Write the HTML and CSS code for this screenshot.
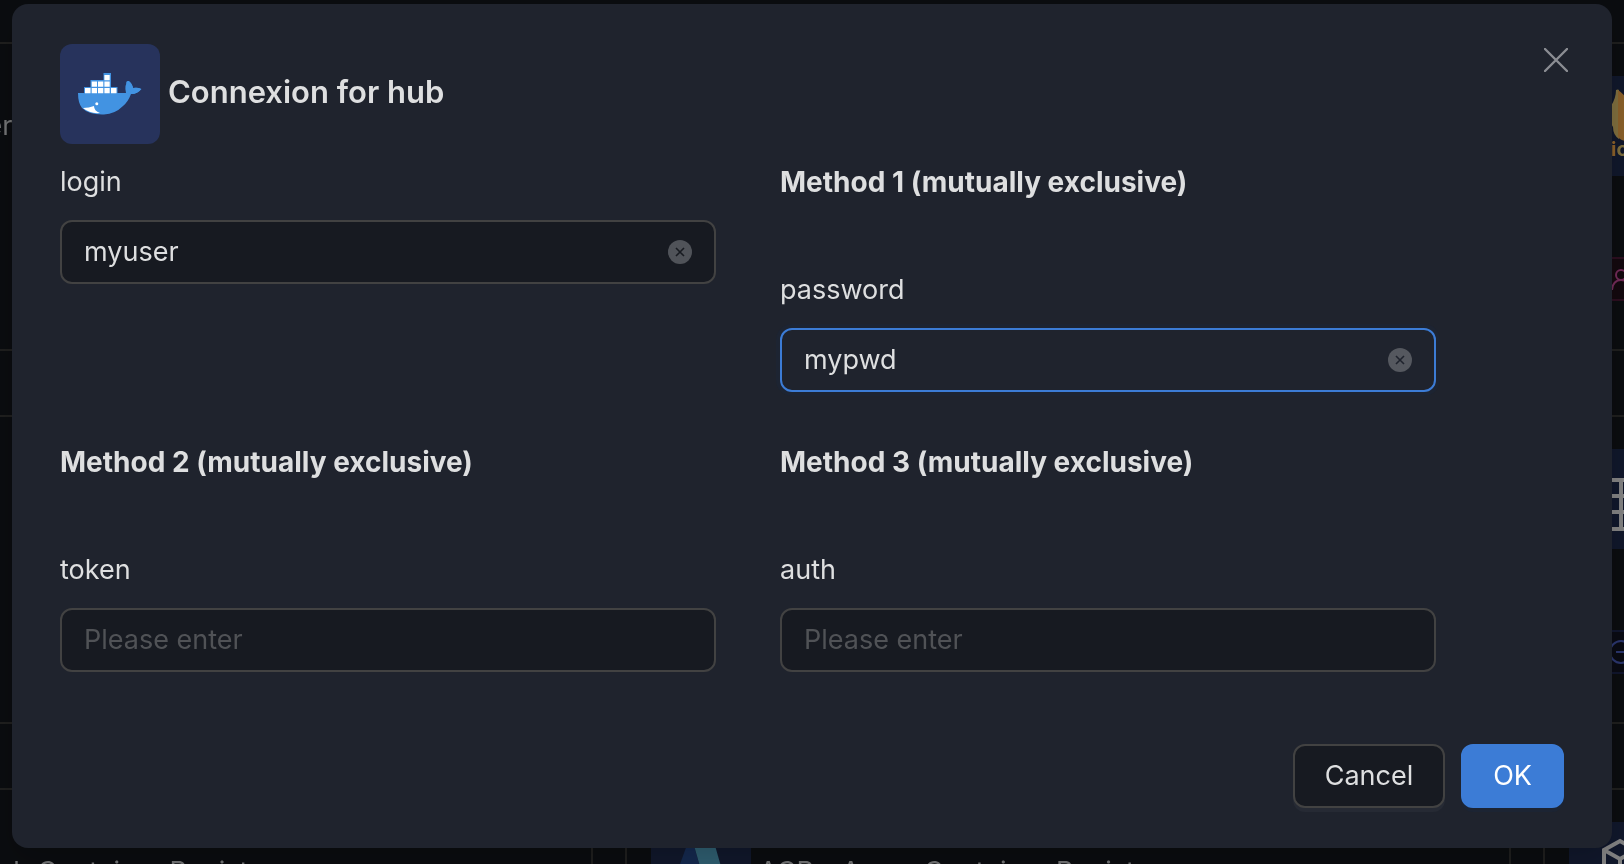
FILE: index.html
```html
<!DOCTYPE html>
<html lang="en">
<head>
<meta charset="utf-8">
<title>Connexion for hub</title>
<link rel="stylesheet" href="styles.css">
</head>
<body>
<main class="board" aria-hidden="true">
  <article class="card"><div class="tile"></div><h2 class="card-title">Hub - Docker</h2></article>
  <article class="card"><div class="tile"></div></article>
  <article class="card">
    <div class="tile">
      <svg class="logo" viewBox="0 0 100 100"><path d="M47 14q2-1 3 0v49q-6-4-6-12-6-8-2-21 5-8 5-16z" fill="#81703f"/><path d="M49 14q6 4 9 10v41q-6 0-9-4z" fill="#8d622b"/><text class="logo-text" x="42" y="80"><tspan fill="#8d622b">i</tspan><tspan fill="#81703f">o</tspan></text></svg>
    </div>
    <div class="tag pink"><svg class="tag-icon" viewBox="0 0 24 24"><circle cx="12" cy="8" r="5"/><path d="M3 23c0-6 4-10 9-10s9 4 9 10"/></svg></div>
  </article>
  <article class="card"></article>
  <article class="card"></article>
  <article class="card">
    <div class="tile">
      <svg class="logo" viewBox="0 0 100 100"><path d="M26 31h48v49H26zM26 47h48M26 63h48M52 31v49" fill="none" stroke="#858585" stroke-width="4"/></svg>
    </div>
    <div class="tag violet"><svg class="tag-icon" viewBox="0 0 24 24"><circle cx="12" cy="12" r="11"/><path d="M7 12h10"/></svg></div>
  </article>
  <article class="card"><div class="tile"></div><h2 class="card-title">GHCR - Github Container Registry</h2></article>
  <article class="card">
    <div class="tile"><svg class="logo" viewBox="0 0 100 100"><path d="M37 20h5l14 50H19z" fill="#152a50"/><path d="M42 20h21l20 70H62z" fill="#306073"/></svg></div>
    <h2 class="card-title">ACR - Azure Container Registry</h2>
  </article>
  <article class="card">
    <div class="tile"><svg class="logo" viewBox="0 0 100 100"><path d="M51 19l16 9v20l-16 9-16-9V28zM35 28l16 9 16-9M51 37v20" fill="none" stroke="#858585" stroke-width="4"/></svg></div>
  </article>
</main>

<div class="backdrop">
  <section class="modal" role="dialog" aria-modal="true" aria-labelledby="title">
    <button class="close" type="button" aria-label="Close">
      <svg viewBox="0 0 24 24"><path d="M1 1l22 22M23 1L1 23" fill="none" stroke="#8b8d93" stroke-width="2.400" stroke-linecap="round"/></svg>
    </button>
    <header class="modal-header">
      <div class="badge">
        <svg viewBox="0 0 100 100">
          <path d="M18 49h48q5 0 2-6-4-7 1-6 3 2 4 7 4-1 8 1-3 5-10 5-3 8-8 12-8 8-19 8.500Q29 71 22 64q-4-5-4-15z" fill="#4293e2"/>
          <path d="M66 49q-2-8 2-12 5 4 5 7 5-1 8.500 1-4 5-10.500 5z" fill="#4293e2"/>
          <path d="M24 43h6.500v-7h13v-7h7.500v14h6.500v7H24z" fill="#4293e2"/>
          <path d="M25 44h5.500v5.300H25zM31.700 44h5.300v5.300h-5.300zM38 44h5.300v5.300H38zM44.400 44h5.300v5.300h-5.300zM51 44h5.500v5.300H51zM31.700 37.500H37v5.300h-5.300zM38 37.500h5.300v5.300H38zM44.400 37.500h5.300v5.300h-5.300zM44.400 31h5.300v5.300h-5.300z" fill="#fff"/>
          <circle cx="36.800" cy="59.700" r="1.500" fill="#fff"/>
          <path d="M23 64q6 0 11-2 0 5 6 7-10 1-17-5z" fill="#fff"/>
        </svg>
      </div>
      <h1 class="modal-title" id="title">Connexion for hub</h1>
    </header>

    <form class="form" id="credentials">
      <div class="group">
        <div class="field">
          <label for="login">login</label>
          <div class="control">
            <input id="login" type="text" value="myuser" placeholder="Please enter">
            <button class="clear" type="button" aria-label="Clear login"><svg viewBox="0 0 24 24"><circle cx="12" cy="12" r="12" fill="#505359"/><path d="M8 8l8 8M16 8l-8 8" stroke="#181b21" stroke-width="1.600"/></svg></button>
          </div>
        </div>
      </div>
      <div class="group">
        <h2 class="method">Method 1 (mutually exclusive)</h2>
        <div class="field">
          <label for="password">password</label>
          <div class="control active">
            <input id="password" type="text" value="mypwd" placeholder="Please enter">
            <button class="clear" type="button" aria-label="Clear password"><svg viewBox="0 0 24 24"><circle cx="12" cy="12" r="12" fill="#55585f"/><path d="M8 8l8 8M16 8l-8 8" stroke="#1f232d" stroke-width="1.600"/></svg></button>
          </div>
        </div>
      </div>
      <div class="group">
        <h2 class="method">Method 2 (mutually exclusive)</h2>
        <div class="field">
          <label for="token">token</label>
          <div class="control"><input id="token" type="text" placeholder="Please enter"></div>
        </div>
      </div>
      <div class="group">
        <h2 class="method">Method 3 (mutually exclusive)</h2>
        <div class="field">
          <label for="auth">auth</label>
          <div class="control"><input id="auth" type="text" placeholder="Please enter"></div>
        </div>
      </div>
    </form>

    <footer class="actions">
      <button class="btn" type="button">Cancel</button>
      <button class="btn primary" type="submit" form="credentials">OK</button>
    </footer>
  </section>
</div>
</body>
</html>
```
FILE: styles.css
```css
* {
  box-sizing: border-box;
}

body {
  margin: 0;
  min-height: 100vh;
  overflow: hidden;
  background: #0b0d10;
  color: #dedfe0;
  font-family: Inter, "Liberation Sans", sans-serif;
  font-size: 27px;
  line-height: 44px;
}

h1,
h2 {
  margin: 0;
}

svg {
  display: block;
}

/* Registry cards, running past both sides of the window */
.board {
  position: fixed;
  top: 42px;
  left: 50%;
  display: grid;
  grid-template-columns: repeat(3, 886px);
  grid-auto-rows: 309px;
  gap: 64px 32px;
  margin-left: -1105px;
}

.card {
  display: grid;
  grid-template-columns: 100px 1fr;
  grid-template-rows: 100px 1fr;
  column-gap: 8px;
  padding: 32px 24px 48px;
  border: 2px solid #20201f;
}

.card-title {
  align-self: center;
  color: #757677;
  font-size: 27px;
  font-weight: 400;
}

.tile {
  width: 100px;
  height: 100px;
  background: #11182c;
}

.logo {
  width: 100px;
  height: 100px;
}

.logo-text {
  font-size: 20px;
  font-weight: 700;
}

.tag {
  grid-row: 2;
  grid-column: 1 / -1;
  display: flex;
  align-items: center;
  justify-content: flex-end;
  align-self: end;
  width: 82px;
  height: 44px;
  padding-right: 16px;
  border: 2px solid;
}

.tag.pink {
  border-color: #2d0f20;
  background: #14090f;
  color: #742c5a;
}

.tag.violet {
  border-color: #11162e;
  background: #0a0b14;
  color: #2c3770;
}

.tag-icon {
  width: 24px;
  height: 24px;
  fill: none;
  stroke: currentColor;
  stroke-width: 2;
}

/* Dialog */
.backdrop {
  position: fixed;
  inset: 0;
  padding: 4px 12px 16px;
}

.modal {
  position: relative;
  padding: 40px 48px;
  border-radius: 16px;
  background: #1f232d;
  box-shadow: 0 12px 32px rgba(0, 0, 0, 0.2);
}

.close {
  position: absolute;
  top: 44px;
  right: 44px;
  width: 24px;
  height: 24px;
  padding: 0;
  border: 0;
  background: none;
}

.modal-header {
  display: flex;
  align-items: center;
  gap: 8px;
}

.badge {
  width: 100px;
  height: 100px;
  border-radius: 12px;
  background: #27335c;
}

.modal-title {
  padding-bottom: 4px;
  font-size: 31px;
  font-weight: 600;
}

.form {
  display: grid;
  grid-template-columns: 1fr 1fr;
  gap: 48px 64px;
  margin-top: 16px;
  padding-right: 128px;
}

.group {
  display: flex;
  flex-direction: column;
  gap: 64px;
}

.method {
  font-size: 28px;
  font-weight: 700;
}

.field {
  display: flex;
  flex-direction: column;
  gap: 16px;
}

.control {
  display: flex;
  align-items: center;
  height: 64px;
  padding: 0 22px;
  border: 2px solid #424242;
  border-radius: 12px;
  background: #171a21;
}

.control.active {
  border-color: #3c7cd6;
  background: #1f232d;
  box-shadow: 0 0 0 4px #1d2432;
}

.control input {
  flex: 1;
  min-width: 0;
  padding: 0;
  border: 0;
  outline: 0;
  background: none;
  color: inherit;
  font: inherit;
}

.control input::placeholder {
  color: #505256;
  opacity: 1;
}

.clear {
  width: 24px;
  height: 24px;
  padding: 0;
  border: 0;
  background: none;
}

.actions {
  display: flex;
  justify-content: flex-end;
  gap: 16px;
  margin-top: 72px;
}

.btn {
  height: 64px;
  padding: 0 30px;
  border: 2px solid #424242;
  border-radius: 12px;
  background: #171a21;
  box-shadow: 0 4px 0 #262a34;
  color: inherit;
  font: inherit;
}

.btn.primary {
  border-color: #3c7cd6;
  background: #3c7cd6;
  box-shadow: 0 4px 0 #1c2433;
  color: #fff;
}
```
